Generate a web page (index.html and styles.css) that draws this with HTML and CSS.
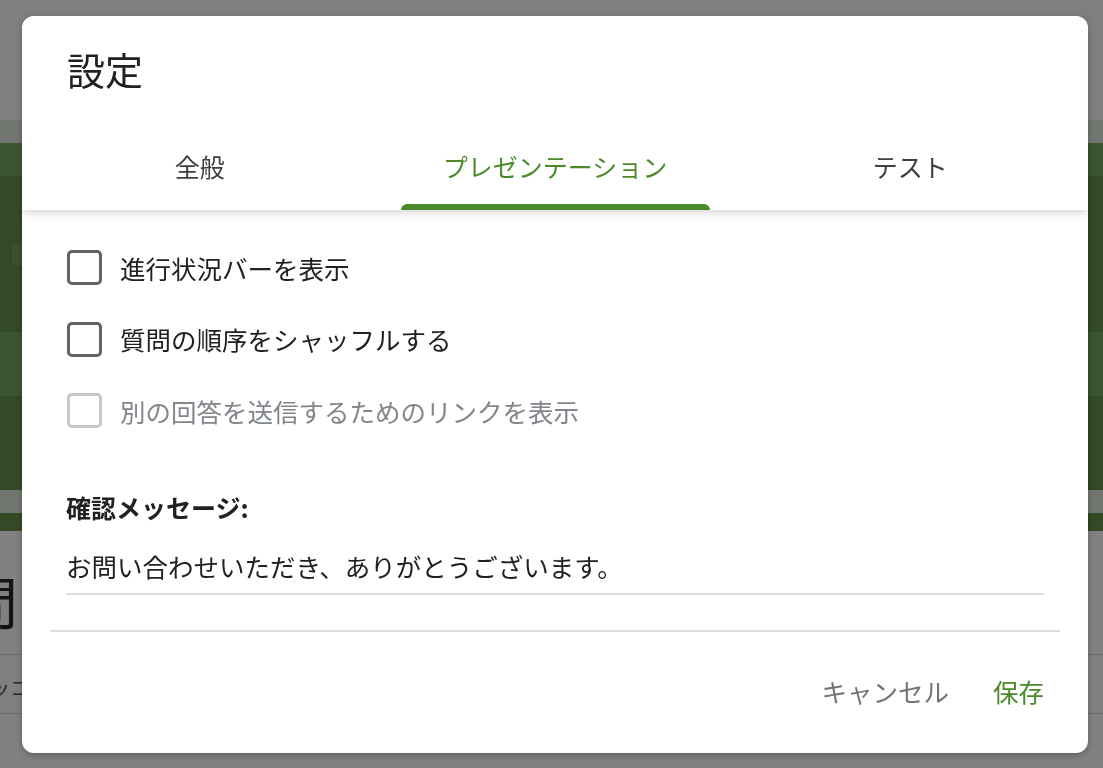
FILE: index.html
```html
<!DOCTYPE html>
<html lang="ja">
<head>
<meta charset="utf-8">
<title>設定</title>
<link rel="stylesheet" href="styles.css">
</head>
<body>
<div class="page">
  <div class="topbar"></div>
  <div class="band"></div>
  <div class="hero">
    <div class="hero-light top"></div>
    <div class="hero-dark first"><div class="ghost-box"></div></div>
    <div class="hero-light mid"></div>
    <div class="hero-dark second"></div>
  </div>
  <div class="band low"></div>
  <div class="strip"></div>
  <div class="content">
    <h1 class="bg-heading">問</h1>
    <div class="bg-row"><span class="bg-row-text">トロッコ</span></div>
  </div>
</div>

<div class="modal" role="dialog" aria-label="設定">
  <div class="modal-header">
    <h2 class="modal-title">設定</h2>
    <div class="tabs">
      <div class="tab">全般</div>
      <div class="tab active"><span class="tab-label">プレゼンテーション</span></div>
      <div class="tab">テスト</div>
    </div>
  </div>
  <div class="modal-body">
    <label class="check-row">
      <span class="box"></span>
      <span class="check-text">進行状況バーを表示</span>
    </label>
    <label class="check-row">
      <span class="box"></span>
      <span class="check-text">質問の順序をシャッフルする</span>
    </label>
    <label class="check-row disabled">
      <span class="box"></span>
      <span class="check-text">別の回答を送信するためのリンクを表示</span>
    </label>
    <div class="field-label">確認メッセージ:</div>
    <div class="field-input">お問い合わせいただき、ありがとうございます。</div>
  </div>
  <div class="divider"></div>
  <div class="modal-footer">
    <button class="btn cancel">キャンセル</button>
    <button class="btn save">保存</button>
  </div>
</div>
</body>
</html>
```

FILE: styles.css
```css
* { box-sizing: border-box; }

html, body {
  margin: 0;
  padding: 0;
  width: 1103px;
  height: 768px;
  overflow: hidden;
  background: #808080;
  font-family: "Noto Sans CJK JP", "Noto Sans", sans-serif;
}

/* ---------- dimmed page behind the dialog ---------- */
.page {
  display: flex;
  flex-direction: column;
  width: 100%;
  height: 768px;
}
.topbar { height: 120px; background: #7f7f7f; }
.band { height: 23px; background: #727670; }
.band.low { height: 23px; }
.hero { display: flex; flex-direction: column; }
.hero-light { background: #3b5530; }
.hero-light.top { height: 33px; }
.hero-light.mid { height: 64px; }
.hero-dark { background: #334a27; }
.hero-dark.first { height: 156px; padding: 67px 0 0 12px; }
.hero-dark.second { height: 94px; }
.ghost-box {
  width: 200px;
  height: 23px;
  border-radius: 4px;
  background: #3a5230;
}
.strip { height: 18px; background: #334a27; }
.content {
  flex: 1;
  background: #808080;
  display: flex;
  flex-direction: column;
  overflow: hidden;
}
.bg-heading {
  margin: 0 0 0 -38px;
  padding-top: 34px;
  height: 124px;
  font-size: 56px;
  font-weight: 400;
  line-height: 70px;
  color: #141414;
  border-bottom: 1px solid #6c6c6c;
}
.bg-row {
  height: 59px;
  border-bottom: 1px solid #6c6c6c;
  display: flex;
  align-items: center;
  padding-top: 8px;
  margin-left: -50px;
}
.bg-row-text { font-size: 20px; line-height: 26px; color: #2a2a2a; }

/* ---------- dialog ---------- */
.modal {
  position: fixed;
  left: 22px;
  top: 16px;
  width: 1066px;
  height: 737px;
  background: #fff;
  border-radius: 12px;
  box-shadow: 0 2px 6px rgba(0,0,0,0.25);
  display: flex;
  flex-direction: column;
  overflow: hidden;
}
.modal-header {
  position: relative;
  z-index: 1;
  background: #fff;
  box-shadow: 0 3px 8px rgba(0,0,0,0.16);
  border-radius: 12px 12px 0 0;
}
.modal-title {
  margin: 0;
  padding: 28px 0 0 45px;
  height: 104px;
  font-size: 38px;
  font-weight: 400;
  line-height: 50px;
  color: #202124;
}
.tabs {
  display: grid;
  grid-template-columns: 1fr 1fr 1fr;
  height: 90px;
}
.tab {
  display: flex;
  justify-content: center;
  align-items: flex-start;
  padding-top: 30px;
  font-size: 25px;
  line-height: 32px;
  color: #3c4043;
}
.tab.active {
  color: #4b8a2a;
  position: relative;
}
.tab.active::after {
  content: "";
  position: absolute;
  left: 24px;
  right: 23px;
  bottom: 0;
  height: 6px;
  background: #4b8a2a;
  border-radius: 6px 6px 0 0;
}

.modal-body {
  padding: 22px 44px 0 44px;
  display: flex;
  flex-direction: column;
}
.check-row {
  display: flex;
  align-items: center;
  height: 71.5px;
  gap: 18px;
  padding-left: 1px;
}
.box {
  width: 35px;
  height: 35px;
  border: 3px solid #5f6368;
  border-radius: 5px;
  flex: none;
}
.check-text {
  font-size: 25.5px;
  line-height: 32px;
  color: #202124;
}
.check-row.disabled .box { border-color: #c6c8cb; }
.check-row.disabled .check-text { color: #80868b; }

.field-label {
  margin-top: 44px;
  font-size: 25px;
  font-weight: 700;
  line-height: 32px;
  color: #202124;
}
.field-input {
  margin-top: 27px;
  font-size: 25.5px;
  line-height: 32px;
  color: #202124;
  padding-bottom: 11px;
  border-bottom: 2px solid #dadce0;
}

.divider {
  margin: 35px 28px 0 28px;
  height: 2px;
  background: #dadce0;
}
.modal-footer {
  flex: 1;
  display: flex;
  justify-content: flex-end;
  align-items: flex-start;
  gap: 44px;
  padding: 43px 44px 0 0;
}
.btn {
  border: 0;
  background: none;
  padding: 0;
  font-family: inherit;
  font-size: 25.5px;
  line-height: 32px;
  cursor: pointer;
}
.btn.cancel { color: #70757a; }
.btn.save { color: #4b8a2a; }
```
